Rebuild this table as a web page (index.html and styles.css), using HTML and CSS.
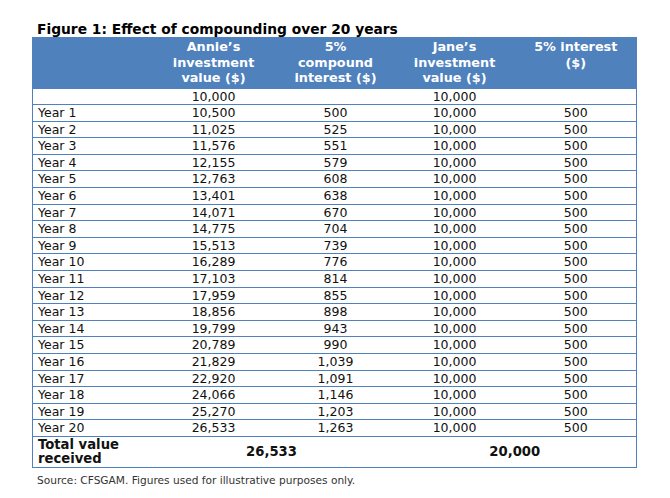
FILE: index.html
```html
<!DOCTYPE html>
<html>
<head>
<meta charset="utf-8">
<link rel="stylesheet" href="styles.css">
</head>
<body>
<div class="figure">
  <div class="title">Figure 1: Effect of compounding over 20 years</div>
  <table class="tbl">
    <colgroup>
      <col class="c0"><col class="c1"><col class="c2"><col class="c3"><col class="c4">
    </colgroup>
    <thead>
      <tr>
        <th></th>
        <th>Annie’s<br>investment<br>value ($)</th>
        <th>5%<br>compound<br>interest ($)</th>
        <th>Jane’s<br>investment<br>value ($)</th>
        <th class="top">5% interest<br>($)</th>
      </tr>
    </thead>
    <tbody>
      <tr><td></td><td>10,000</td><td></td><td>10,000</td><td></td></tr>
      <tr><td>Year 1</td><td>10,500</td><td>500</td><td>10,000</td><td>500</td></tr>
      <tr><td>Year 2</td><td>11,025</td><td>525</td><td>10,000</td><td>500</td></tr>
      <tr><td>Year 3</td><td>11,576</td><td>551</td><td>10,000</td><td>500</td></tr>
      <tr><td>Year 4</td><td>12,155</td><td>579</td><td>10,000</td><td>500</td></tr>
      <tr><td>Year 5</td><td>12,763</td><td>608</td><td>10,000</td><td>500</td></tr>
      <tr><td>Year 6</td><td>13,401</td><td>638</td><td>10,000</td><td>500</td></tr>
      <tr><td>Year 7</td><td>14,071</td><td>670</td><td>10,000</td><td>500</td></tr>
      <tr><td>Year 8</td><td>14,775</td><td>704</td><td>10,000</td><td>500</td></tr>
      <tr><td>Year 9</td><td>15,513</td><td>739</td><td>10,000</td><td>500</td></tr>
      <tr><td>Year 10</td><td>16,289</td><td>776</td><td>10,000</td><td>500</td></tr>
      <tr><td>Year 11</td><td>17,103</td><td>814</td><td>10,000</td><td>500</td></tr>
      <tr><td>Year 12</td><td>17,959</td><td>855</td><td>10,000</td><td>500</td></tr>
      <tr><td>Year 13</td><td>18,856</td><td>898</td><td>10,000</td><td>500</td></tr>
      <tr><td>Year 14</td><td>19,799</td><td>943</td><td>10,000</td><td>500</td></tr>
      <tr><td>Year 15</td><td>20,789</td><td>990</td><td>10,000</td><td>500</td></tr>
      <tr><td>Year 16</td><td>21,829</td><td>1,039</td><td>10,000</td><td>500</td></tr>
      <tr><td>Year 17</td><td>22,920</td><td>1,091</td><td>10,000</td><td>500</td></tr>
      <tr><td>Year 18</td><td>24,066</td><td>1,146</td><td>10,000</td><td>500</td></tr>
      <tr><td>Year 19</td><td>25,270</td><td>1,203</td><td>10,000</td><td>500</td></tr>
      <tr><td>Year 20</td><td>26,533</td><td>1,263</td><td>10,000</td><td>500</td></tr>
      <tr class="total">
        <td>Total value<br>received</td>
        <td colspan="2">26,533</td>
        <td colspan="2">20,000</td>
      </tr>
    </tbody>
  </table>
  <div class="source">Source: CFSGAM. Figures used for illustrative purposes only.</div>
</div>
</body>
</html>
```

FILE: styles.css
```css
html, body {
  margin: 0;
  padding: 0;
  background: #ffffff;
}

body {
  font-family: "DejaVu Sans", Verdana, sans-serif;
  color: #111111;
}

.figure {
  padding: 21px 0 0 32px;
}

.title {
  font-size: 13.8px;
  font-weight: bold;
  line-height: 16px;
  padding-left: 5px;
  color: #000000;
}

.tbl {
  border-collapse: collapse;
  width: 604px;
  table-layout: fixed;
  border: 1px solid #4f81bd;
}

.c0 { width: 117px; }
.c1 { width: 128px; }
.c2 { width: 116px; }
.c3 { width: 122px; }
.c4 { width: 121px; }

.tbl th {
  background: #4f81bd;
  color: #ffffff;
  font-size: 12.8px;
  font-weight: bold;
  line-height: 15.5px;
  padding: 1px 0 2px;
  text-align: center;
  vertical-align: top;
}

.tbl td {
  font-size: 12.5px;
  line-height: 15.6px;
  padding: 0;
  text-align: center;
  border-top: 1px solid #4f81bd;
  white-space: nowrap;
}

.tbl td:first-child {
  text-align: left;
  padding-left: 5px;
}

.tbl tr.total td {
  font-size: 13.2px;
  font-weight: bold;
  line-height: 14px;
  padding-top: 1px;
  padding-bottom: 1px;
  vertical-align: middle;
}

.source {
  font-size: 10.6px;
  color: #333333;
  padding: 6px 0 0 5px;
}
```
